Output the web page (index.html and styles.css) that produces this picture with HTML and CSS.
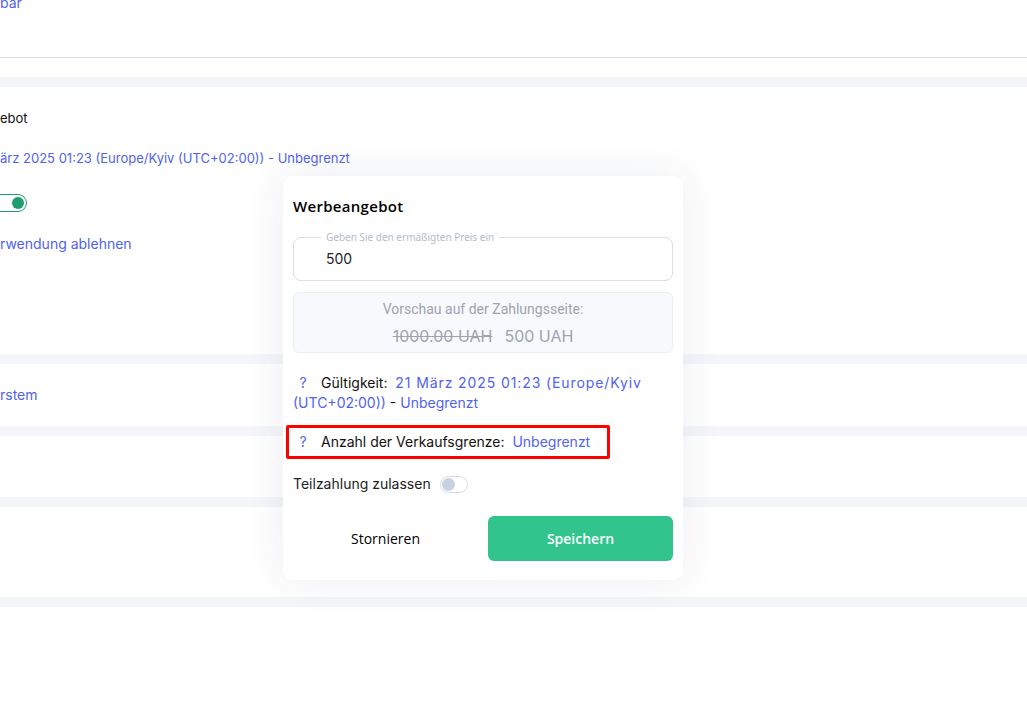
FILE: index.html
```html
<!DOCTYPE html>
<html lang="de">
<head>
    <meta charset="UTF-8">
    <meta name="viewport" content="width=device-width, initial-scale=1.0">
    <title>Werbeangebot</title>
    <link rel="stylesheet" href="styles.css">
</head>
<body>
    <div class="page">
        <div class="card card-head">
            <div class="head-row">
                <a class="link first-link">bar</a>
            </div>
        </div>
        <div class="card card-offer">
            <div class="label">ebot</div>
            <a class="link period">ärz 2025 01:23 (Europe/Kyiv (UTC+02:00)) - Unbegrenzt</a>
            <span class="switch on"><span class="knob"></span></span>
            <a class="link">rwendung ablehnen</a>
        </div>
        <div class="card card-small">
            <a class="link">rstem</a>
        </div>
        <div class="card card-empty"></div>
        <div class="card card-last"></div>
    </div>

    <div class="modal">
        <div class="modal-title">Werbeangebot</div>
        <fieldset class="price">
            <legend>Geben Sie den ermäßigten Preis ein</legend>
            <input type="text" value="500">
        </fieldset>
        <div class="preview">
            <div>Vorschau auf der Zahlungsseite:</div>
            <div class="prices"><s>1000.00 UAH</s><span>500 UAH</span></div>
        </div>
        <div class="info">
            <span class="help">?</span>Gültigkeit:&nbsp; <a class="link"><span class="date">21 März 2025 01:23 (Europe/Kyiv</span> (UTC+02:00))</a>&nbsp;- <a class="link">Unbegrenzt</a>
        </div>
        <div class="info limit">
            <span class="help">?</span>Anzahl der Verkaufsgrenze:&nbsp; <a class="link">Unbegrenzt</a>
        </div>
        <div class="partial">
            Teilzahlung zulassen
            <span class="switch off"><span class="knob"></span></span>
        </div>
        <div class="actions">
            <button class="btn cancel">Stornieren</button>
            <button class="btn save">Speichern</button>
        </div>
    </div>
</body>
</html>
```

FILE: styles.css
```css
body {
    margin: 0;
    overflow: hidden;
    font-family: 'Inter', 'Liberation Sans', sans-serif;
    font-size: 14px;
    color: #111;
    background-color: white;
}
.link {
    color: #5062f4;
    cursor: pointer;
}
.page {
    display: flex;
    flex-direction: column;
    gap: 10px;
    padding-bottom: 10px;
    background: #f4f6f9;
}
.card {
    background: #fff;
    line-height: 20px;
}
.card-head {
    height: 77px;
}
.head-row {
    display: flow-root;
    height: 57px;
    border-bottom: 1px solid #e1e0e8;
}
.first-link {
    display: block;
    margin-top: -7px;
}
.card-offer {
    height: 246px;
    padding-top: 21px;
    display: flex;
    flex-direction: column;
    align-items: flex-start;
}
.label {
    font-size: 13px;
}
.card-offer .period {
    margin-top: 20px;
    font-size: 13px;
}
.card-offer .switch {
    margin-top: 26px;
    margin-left: -10px;
}
.card-offer .link:last-child {
    margin-top: 22px;
}
.card-small {
    height: 41px;
    padding-top: 21px;
}
.card-empty {
    height: 61px;
}
.card-last {
    height: 90px;
}
.switch {
    display: inline-flex;
    align-items: center;
    box-sizing: border-box;
    border-radius: 10px;
    background: #fff;
}
.switch.on {
    width: 37px;
    height: 18px;
    border: 1.5px solid #1f9d6e;
    justify-content: flex-end;
    padding-right: 2px;
}
.switch.on .knob {
    background: #1f9d6e;
    width: 12px;
    height: 12px;
}
.switch.off {
    width: 28px;
    height: 17px;
    border: 1px solid #d6dbe4;
    padding-left: 1px;
}
.switch.off .knob {
    background: #c6d1e2;
    width: 13px;
    height: 13px;
}
.knob {
    border-radius: 50%;
}
.modal {
    position: absolute;
    left: 283px;
    top: 176px;
    width: 380px;
    padding: 20px 10px 19px;
    background: #fff;
    border-radius: 10px;
    box-shadow: 0 0 40px rgba(40, 55, 100, 0.09);
}
.modal-title {
    font-family: 'Open Sans', sans-serif;
    font-weight: 600;
    font-size: 15px;
    letter-spacing: 0.3px;
    line-height: 20px;
    color: #000;
}
.price {
    margin: 15px 0 0;
    padding: 0 0 7px 27px;
    border: 1px solid #dedde8;
    border-radius: 8px;
}
.price legend {
    padding: 0 5px;
    font-family: 'Noto Sans', sans-serif;
    font-size: 10px;
    line-height: 12px;
    color: #b4bbca;
}
.price input {
    display: block;
    width: 300px;
    height: 30px;
    padding: 0 0 0 5px;
    margin: 0;
    border: none;
    outline: none;
    font-family: 'Inter', sans-serif;
    font-size: 14px;
    color: #222;
    background: transparent;
}
.preview {
    margin-top: 11px;
    padding: 6px 0;
    border: 1px solid #eceef4;
    border-radius: 6px;
    background: #f8f9fc;
    text-align: center;
    font-family: 'Roboto', sans-serif;
    color: #9ea3af;
    line-height: 20px;
}
.prices {
    margin-top: 7px;
    font-family: 'Inter', sans-serif;
    font-size: 16px;
}
.prices span {
    margin-left: 12px;
}
.info {
    margin-top: 20px;
    line-height: 20px;
}
.date {
    letter-spacing: 0.9px;
}
.help {
    display: inline-block;
    width: 20px;
    margin-right: 8px;
    text-align: center;
    color: #5062f4;
}
.limit {
    display: inline-block;
    margin: 12px 0 0 -7px;
    padding: 4px 17px 4px 4px;
    border: 3px solid #ff0000;
    border-radius: 2px;
    line-height: 20px;
}
.partial {
    margin-top: 15px;
    display: flex;
    align-items: center;
    gap: 9px;
    line-height: 20px;
    color: #222;
}
.actions {
    margin-top: 22px;
    display: flex;
    gap: 10px;
}
.btn {
    flex: 1;
    height: 45px;
    border: none;
    border-radius: 6px;
    font-family: 'Open Sans', sans-serif;
    font-size: 14px;
    cursor: pointer;
}
.cancel {
    background: #fff;
    color: #000;
}
.save {
    background: #31c48d;
    color: #fff;
    font-weight: 600;
}
```
